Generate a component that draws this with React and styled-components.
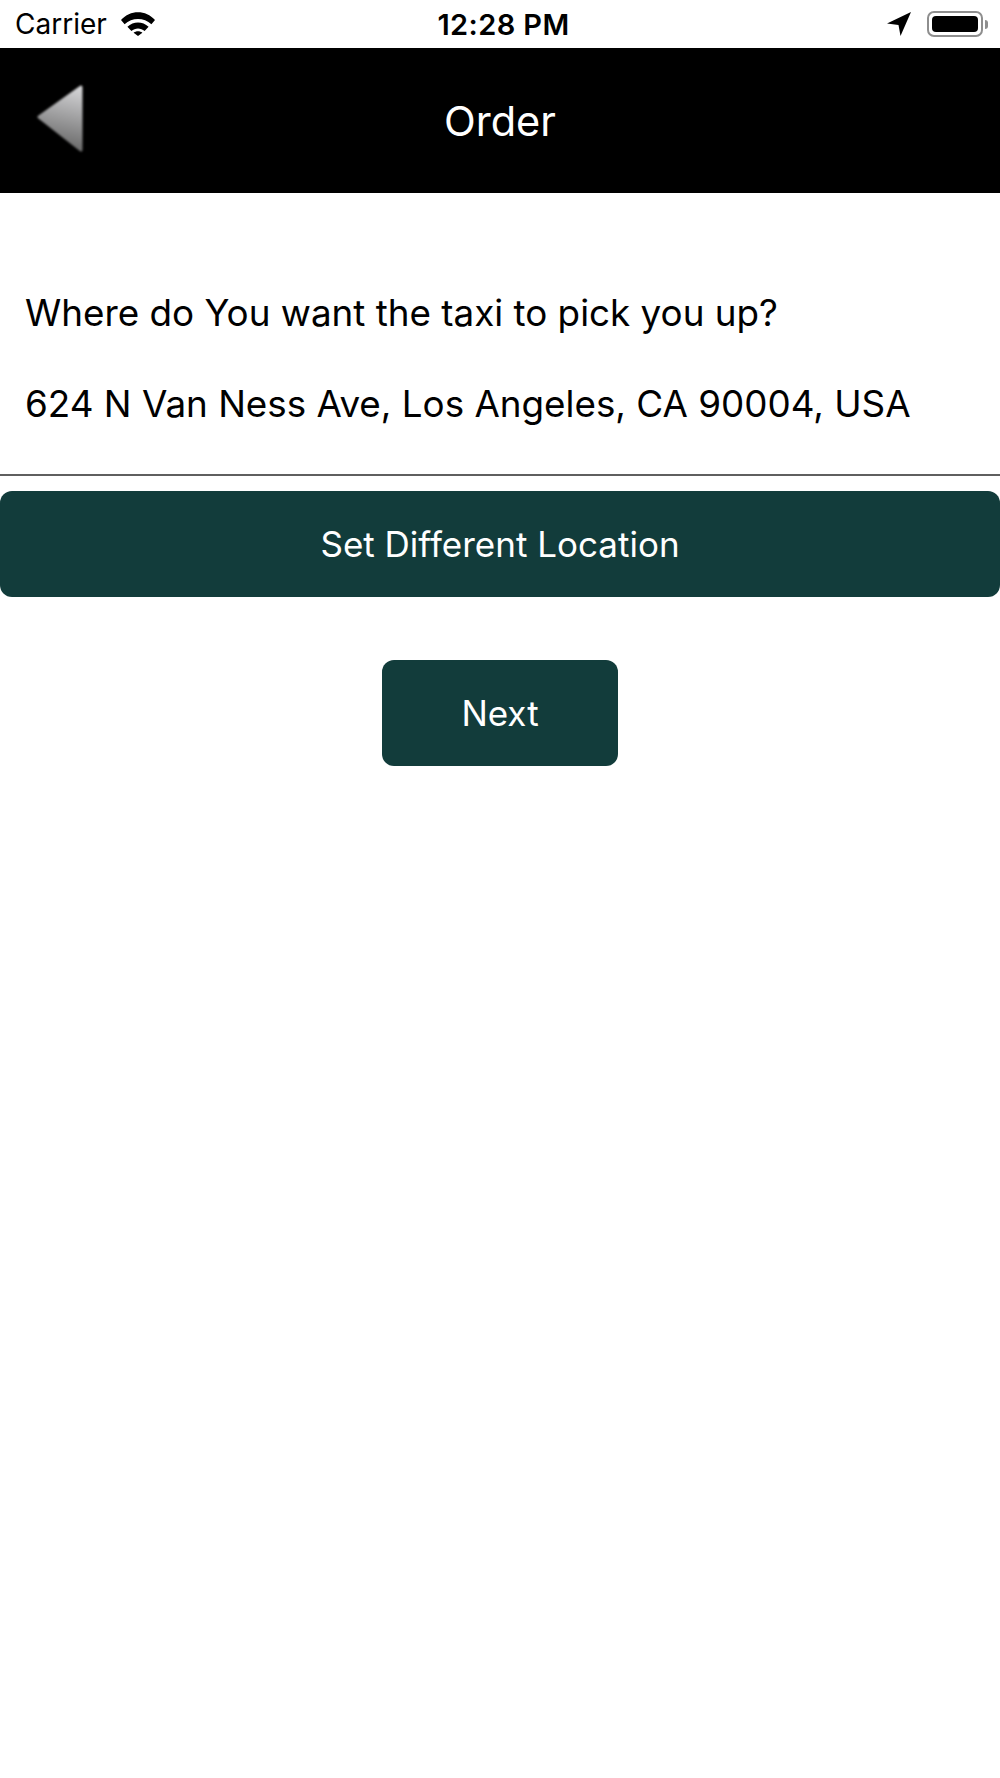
import React from 'react';
import styled, { createGlobalStyle } from 'styled-components';

const GlobalStyle = createGlobalStyle`
  html, body {
    margin: 0;
    padding: 0;
    background: #ffffff;
  }
  body {
    font-family: Inter, "Liberation Sans", sans-serif;
  }
`;

const App = () => {
  return (
    <Page>
      <GlobalStyle />
      <StatusBar>
        <StatusLeft>
          <Carrier>Carrier</Carrier>
          <svg width="34" height="24" viewBox="0 0 34 24">
            <path d="M0 8C9 -2.5 25 -2.5 34 8L30.4 12.2C23 5.2 11 5.2 3.6 12.2Z" fill="#000" />
            <path d="M6.4 14.8C12.5 9 21.5 9 27.6 14.8L23.6 19C19.8 15.6 14.2 15.6 10.4 19Z" fill="#000" />
            <path d="M12.6 20.8C15.2 18.8 18.8 18.8 21.4 20.8L17 24Z" fill="#000" />
          </svg>
        </StatusLeft>
        <Clock>12:28 PM</Clock>
        <StatusRight>
          <svg width="26" height="26" viewBox="0 0 26 26">
            <path d="M25 1L1 12.5L12.5 14L14.5 25Z" fill="#000" />
          </svg>
          <Battery>
            <BatteryFill />
          </Battery>
          <BatteryCap />
        </StatusRight>
      </StatusBar>

      <NavBar>
        <BackButton>
          <svg width="52" height="70" viewBox="0 0 52 70">
            <defs>
              <linearGradient id="backFill" x1="0.75" y1="0" x2="0.6" y2="1">
                <stop offset="0" stopColor="#d2d2d4" />
                <stop offset="1" stopColor="#666666" />
              </linearGradient>
            </defs>
            <path d="M47 3L47 66L5 33Z" fill="url(#backFill)" stroke="url(#backFill)" strokeWidth="3" strokeLinejoin="round" />
          </svg>
        </BackButton>
        <NavTitle>Order</NavTitle>
      </NavBar>

      <Content>
        <Question>Where do You want the taxi to pick you up?</Question>
        <Address>624 N Van Ness Ave, Los Angeles, CA 90004, USA</Address>
      </Content>
      <Divider />

      <Actions>
        <ActionButton $wide>Set Different Location</ActionButton>
        <ActionButton>Next</ActionButton>
      </Actions>
    </Page>
  );
};

export default App;

const Page = styled.div`
  width: 1000px;
  min-height: 1778px;
  background: #ffffff;
  color: #000000;
  display: flex;
  flex-direction: column;
`;

const StatusBar = styled.div`
  height: 48px;
  display: grid;
  grid-template-columns: 1fr auto 1fr;
  align-items: center;
  padding: 0 12px 0 15px;
  box-sizing: border-box;
`;

const StatusLeft = styled.div`
  display: flex;
  align-items: center;
  gap: 14px;
`;

const Carrier = styled.span`
  font-size: 28px;
`;

const Clock = styled.span`
  margin-left: 4px;
  font-size: 29px;
  font-weight: 600;
  letter-spacing: 0.4px;
`;

const StatusRight = styled.div`
  display: flex;
  align-items: center;
  justify-content: flex-end;
`;

const Battery = styled.div`
  width: 56px;
  height: 26px;
  margin-left: 15px;
  box-sizing: border-box;
  border: 2px solid #8e8e8e;
  border-radius: 7px;
  padding: 3px;
  display: flex;
`;

const BatteryFill = styled.div`
  flex: 1;
  background: #000000;
  border-radius: 4px;
`;

const BatteryCap = styled.div`
  width: 3px;
  height: 9px;
  margin-left: 2px;
  background: #8e8e8e;
  border-radius: 0 3px 3px 0;
`;

const NavBar = styled.header`
  height: 145px;
  background: #000000;
  position: relative;
  display: flex;
  align-items: center;
  justify-content: center;
`;

const BackButton = styled.div`
  position: absolute;
  left: 34px;
  top: 36px;
  display: flex;
  filter: blur(0.8px);
`;

const NavTitle = styled.h1`
  margin: 0;
  color: #ffffff;
  font-size: 41.5px;
  font-weight: 400;
`;

const Content = styled.div`
  padding: 98px 25px 0;
  height: 281px;
  box-sizing: border-box;
  display: flex;
  flex-direction: column;
  gap: 47px;
`;

const Question = styled.p`
  margin: 0;
  font-size: 36.8px;
  line-height: 44px;
`;

const Address = styled.p`
  margin: 0;
  font-size: 36.8px;
  line-height: 44px;
`;

const Divider = styled.div`
  height: 2px;
  background: #5f5f5f;
`;

const Actions = styled.div`
  margin-top: 15px;
  display: flex;
  flex-direction: column;
  align-items: center;
  gap: 63px;
`;

const ActionButton = styled.div`
  width: ${(p) => (p.$wide ? '1000px' : '236px')};
  height: 106px;
  border-radius: 12px;
  background: #123c3b;
  color: #ffffff;
  font-size: 35px;
  display: flex;
  align-items: center;
  justify-content: center;
`;
